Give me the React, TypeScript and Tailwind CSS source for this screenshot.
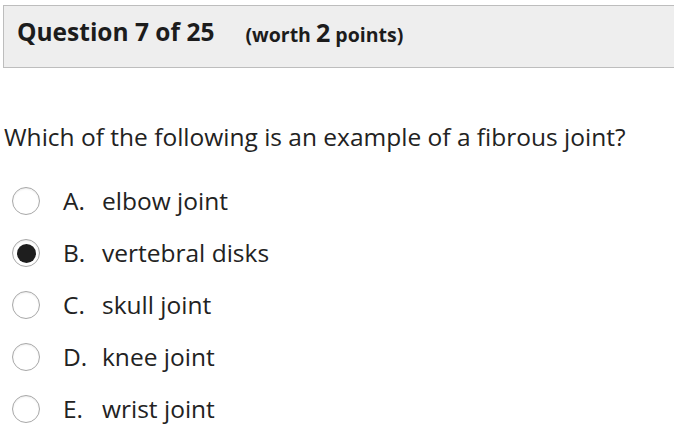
import React, { useState } from 'react';

const OPTIONS = [
  { letter: 'A.', text: 'elbow joint' },
  { letter: 'B.', text: 'vertebral disks' },
  { letter: 'C.', text: 'skull joint' },
  { letter: 'D.', text: 'knee joint' },
  { letter: 'E.', text: 'wrist joint' },
];

const App: React.FC = () => {
  const [selected, setSelected] = useState(1);

  return (
    <div className="w-[674px] h-[441px] bg-white overflow-hidden text-[#222] font-['Open_Sans',sans-serif]">
      <div className="mt-[5px] ml-[3px] h-[63px] border border-r-0 border-[#bdbdbd] bg-[#eeeeee] flex items-center pl-[13px] pb-[8px]">
        <span className="text-[24.5px] font-bold text-[#1c1c1c]">Question 7 of 25</span>
        <span className="ml-[31px] text-[19.5px] font-bold text-[#1c1c1c]">
          (worth <span className="text-[25px]">2</span> points)
        </span>
      </div>

      <div className="mt-[52px] ml-[4px] text-[24.5px] leading-[34px] text-[#222]">
        Which of the following is an example of a fibrous joint?
      </div>

      <div className="mt-[30px] flex flex-col gap-[18px]">
        {OPTIONS.map((o, i) => (
          <label key={o.letter} className="flex items-center h-[34px] cursor-pointer" onClick={() => setSelected(i)}>
            <span className="ml-[12px] w-[28px] h-[28px] rounded-full border border-[#a8a8a8] bg-white flex items-center justify-center shadow-[inset_0_1px_2px_rgba(0,0,0,0.08)]">
              {selected === i && <span className="w-[19px] h-[19px] rounded-full bg-[#1e1e1e]" />}
            </span>
            <span className="ml-[23px] w-[39px] text-[24.5px] leading-[34px] text-[#222]">{o.letter}</span>
            <span className="text-[24.5px] leading-[34px] text-[#222]">{o.text}</span>
          </label>
        ))}
      </div>
    </div>
  );
};

export default App;
